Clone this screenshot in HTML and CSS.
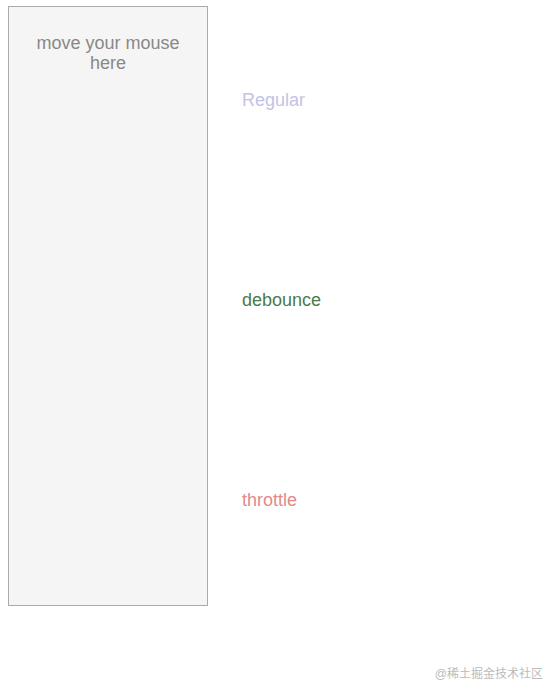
FILE: index.html
```html
<!DOCTYPE html>
<html lang="en">
<head>
    <meta charset="UTF-8">
    <meta name="viewport" content="width=device-width, initial-scale=1.0">
    <title>debounce / throttle</title>
    <link rel="stylesheet" href="styles.css">
</head>
<body>
    <div class="wrap">
        <div class="area">move your mouse here</div>
        <div class="list">
            <div class="item regular">Regular</div>
            <div class="item debounce">debounce</div>
            <div class="item throttle">throttle</div>
        </div>
    </div>
    <div class="mark">@稀土掘金技术社区</div>
</body>
</html>
```

FILE: styles.css
```css
body {
    margin: 6px 8px;
    font-family: "Liberation Sans", Arial, sans-serif;
}
.wrap {
    display: flex;
}
.area {
    box-sizing: border-box;
    width: 200px;
    height: 600px;
    border: 1px solid #aaa;
    background: #f5f5f5;
    color: #888;
    font-size: 18px;
    line-height: 20px;
    text-align: center;
    padding: 26px 20px 0;
}
.list {
    margin-left: 34px;
}
.item {
    box-sizing: border-box;
    height: 200px;
    padding-top: 84px;
    font-size: 18px;
    line-height: 20px;
}
.regular {
    color: #c3c3e6;
}
.debounce {
    color: #4b7a4b;
}
.throttle {
    color: #e28a8a;
}
.mark {
    position: absolute;
    right: 17px;
    top: 664px;
    font-size: 12px;
    color: #bbb;
    font-family: "Liberation Sans", "Noto Sans CJK SC", sans-serif;
}
```
